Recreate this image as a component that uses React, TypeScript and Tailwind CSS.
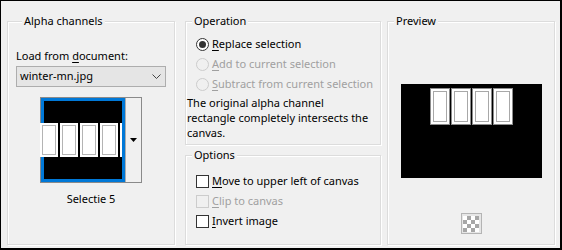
import React from 'react';

const font = { fontFamily: '"Noto Sans", "Open Sans", sans-serif' };

function Group({ title, className, children }: { title: string; className: string; children?: React.ReactNode }) {
  return (
    <fieldset
      className={`border border-[#dcdcdc] shadow-[inset_1px_1px_0_#ffffff,1px_1px_0_#ffffff] ${className}`}
    >
      <legend className="ml-[6px] px-[2px] bg-[#f0f0f0] text-[11px] leading-[16px] text-black">{title}</legend>
      {children}
    </fieldset>
  );
}

function Radio({ checked, disabled, children }: { checked?: boolean; disabled?: boolean; children: React.ReactNode }) {
  return (
    <div className="flex items-center h-[20px] pl-[10px] whitespace-nowrap">
      <span
        className={`w-[13px] h-[13px] shrink-0 rounded-full border flex items-center justify-center ${
          disabled ? 'border-[#cccccc] bg-[#f0f0f0]' : 'border-[#333333] bg-white'
        }`}
      >
        {checked && <span className="w-[7px] h-[7px] rounded-full bg-[#333333]" />}
      </span>
      <span className={`ml-[3px] text-[11px] ${disabled ? 'text-[#a0a0a0]' : 'text-black'}`}>{children}</span>
    </div>
  );
}

function Check({ disabled, children }: { disabled?: boolean; children: React.ReactNode }) {
  return (
    <div className="flex items-center h-[20px] pl-[10px] whitespace-nowrap">
      <span
        className={`w-[13px] h-[13px] shrink-0 border ${
          disabled ? 'border-[#cccccc] bg-[#f0f0f0]' : 'border-[#333333] bg-white'
        }`}
      />
      <span className={`ml-[3px] text-[11px] ${disabled ? 'text-[#a0a0a0]' : 'text-black'}`}>{children}</span>
    </div>
  );
}

function ThumbPanel() {
  return (
    <div className="w-[18px] h-full bg-white p-[2px] shrink-0">
      <div className="w-full h-full border border-[#b4b4b4]" />
    </div>
  );
}

function PreviewPanel() {
  return (
    <div className="w-[20px] h-[37px] border border-[#8c8c8c] bg-white p-[2px]">
      <div className="w-full h-full border border-[#a8a8a8]" />
    </div>
  );
}

export default function App() {
  const checker = [0, 1, 0, 1, 1, 0, 1, 0, 0, 1, 0, 1, 1, 0, 1, 0];

  return (
    <div
      style={font}
      className="w-[562px] h-[250px] bg-[#f0f0f0] border-t border-l border-r-2 border-b-2 border-black text-black"
    >
      <div className="flex pt-[12px] pl-[6px]">
        {/* Alpha channels */}
        <Group title="Alpha channels" className="w-[168px] h-[232px] pl-[8px]">
          <div className="mt-[19px] text-[11px] leading-[16px]">
            Load from <u className="underline-offset-2">d</u>ocument:
          </div>
          <div className="mt-[2px] w-[150px] h-[21px] border border-[#adadad] bg-[#e5e5e5] flex items-center justify-between pl-[3px] pr-[4px] text-[11px]">
            <span>winter-mn.jpg</span>
            <svg width="9" height="5" viewBox="0 0 9 5">
              <path d="M0.5 0.5 L4.5 4.5 L8.5 0.5" fill="none" stroke="#444" strokeWidth="1" />
            </svg>
          </div>
          <div className="flex justify-center mt-[10px] pr-[8px]">
            <div className="flex w-[102px] h-[86px] border border-[#8a8a8a] bg-white">
              <div className="w-[84px] h-[84px] border-[3px] border-[#0078d7] bg-black flex flex-col">
                <div className="h-[22px]" />
                <div className="h-[34px] flex gap-[2px] -ml-[4px] overflow-hidden">
                  <ThumbPanel />
                  <ThumbPanel />
                  <ThumbPanel />
                  <ThumbPanel />
                  <ThumbPanel />
                </div>
              </div>
              <div className="flex-1 border-l border-[#adadad] bg-[#f0f0f0] flex items-center justify-center">
                <svg width="7" height="4" viewBox="0 0 7 4">
                  <path d="M0 0 L7 0 L3.5 4 Z" fill="#000" />
                </svg>
              </div>
            </div>
          </div>
          <div className="mt-[8px] pr-[8px] text-center text-[11px] leading-[16px]">Selectie 5</div>
        </Group>

        {/* Middle column */}
        <div className="flex flex-col gap-[2px] ml-[10px]">
          <Group title="Operation" className="w-[196px] h-[132px]">
            <div className="mt-[5px]">
              <Radio checked>
                <u className="underline-offset-2">R</u>eplace selection
              </Radio>
              <Radio disabled>
                <u className="underline-offset-2">A</u>dd to current selection
              </Radio>
              <Radio disabled>
                <u className="underline-offset-2">S</u>ubtract from current selection
              </Radio>
            </div>
            <div className="mt-[1px] pl-[1px] text-[11px] leading-[15px] whitespace-nowrap">
              The original alpha channel
              <br />
              rectangle completely intersects the
              <br />
              canvas.
            </div>
          </Group>
          <Group title="Options" className="w-[196px] h-[98px]">
            <div className="mt-[8px]">
              <Check>
                <u className="underline-offset-2">M</u>ove to upper left of canvas
              </Check>
              <Check disabled>
                <u className="underline-offset-2">C</u>lip to canvas
              </Check>
              <Check>
                <u className="underline-offset-2">I</u>nvert image
              </Check>
            </div>
          </Group>
        </div>

        {/* Preview */}
        <Group title="Preview" className="ml-[6px] w-[168px] h-[232px]">
          <div className="flex justify-center mt-[55px]">
            <div className="w-[141px] h-[94px] bg-black flex justify-center gap-[1px] pt-[4px]">
              <PreviewPanel />
              <PreviewPanel />
              <PreviewPanel />
              <PreviewPanel />
            </div>
          </div>
          <div className="flex justify-center mt-[35px]">
            <div className="w-[21px] h-[21px] border border-[#b4b4b4] bg-[#e6e6e6] flex items-center justify-center">
              <div className="grid grid-cols-4 w-[16px] h-[16px]">
                {checker.map((c, i) => (
                  <div key={i} className={c ? 'bg-[#a6a6a6]' : 'bg-white'} />
                ))}
              </div>
            </div>
          </div>
        </Group>
      </div>
    </div>
  );
}
